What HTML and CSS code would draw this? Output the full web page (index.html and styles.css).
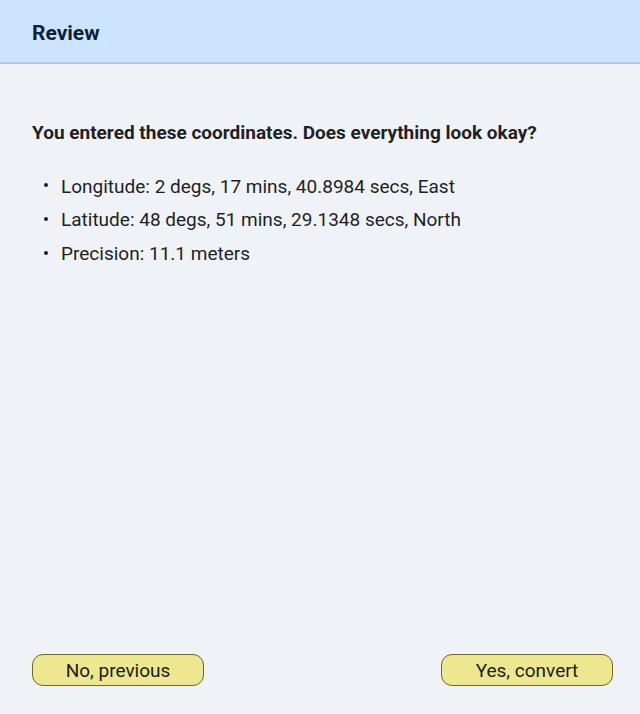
FILE: index.html
```html
<!DOCTYPE html>
<html lang="en">
<head>
<meta charset="utf-8">
<title>Review</title>
<link rel="stylesheet" href="styles.css">
</head>
<body>
<div class="page">
  <header class="header"><h1 class="title">Review</h1></header>
  <main class="content">
    <p class="question">You entered these coordinates. Does everything look okay?</p>
    <ul class="list">
      <li>Longitude: 2 degs, 17 mins, 40.8984 secs, East</li>
      <li>Latitude: 48 degs, 51 mins, 29.1348 secs, North</li>
      <li>Precision: 11.1 meters</li>
    </ul>
  </main>
  <footer class="footer">
    <button class="btn">No, previous</button>
    <button class="btn">Yes, convert</button>
  </footer>
</div>
</body>
</html>
```
FILE: styles.css
```css
html, body {
  margin: 0;
  padding: 0;
  height: 100%;
}
body {
  background: #eff3f7;
  font-family: Roboto, "Noto Sans", sans-serif;
  color: #1f1f24;
}
.page {
  display: flex;
  flex-direction: column;
  height: 714px;
}
.header {
  background: #cce4fe;
  border-bottom: 2px solid #a3cbf3;
  display: flex;
  align-items: center;
  padding: 4px 32px 0;
  box-sizing: content-box;
  height: 58px;
}
.title {
  margin: 0;
  font-size: 21px;
  line-height: 24px;
  font-weight: 700;
  color: #0d223a;
}
.content {
  flex: 1;
  padding: 57px 32px 0;
}
.question {
  margin: 0;
  font-size: 19px;
  font-weight: 700;
  line-height: 24px;
}
.list {
  margin: 24.6px 0 0;
  padding: 0 0 0 29px;
  list-style: none;
}
.list li {
  position: relative;
  font-size: 19px;
  line-height: 33.7px;
}
.list li::before {
  content: "";
  position: absolute;
  left: -17px;
  top: 13.5px;
  width: 4px;
  height: 4px;
  border-radius: 50%;
  background: #1f1f24;
}
.footer {
  display: flex;
  justify-content: space-between;
  padding: 0 27px 28px 32px;
}
.btn {
  width: 172px;
  height: 32px;
  background: #ede88f;
  border: 1px solid #6f6a22;
  border-radius: 11px;
  font-family: Roboto, sans-serif;
  font-size: 19px;
  color: #1d1d12;
  padding: 0;
  display: flex;
  align-items: center;
  justify-content: center;
}
```
